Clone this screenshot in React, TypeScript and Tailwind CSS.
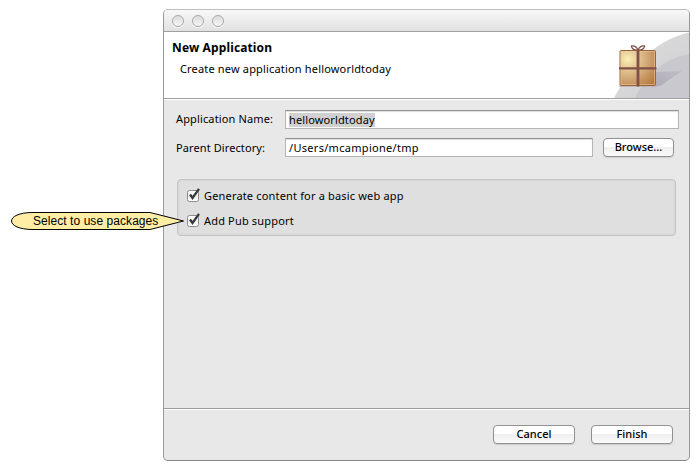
import type { ReactNode } from "react";

function PushButton({ children, className }: { children: ReactNode; className: string }) {
  return (
    <button
      type="button"
      className={`flex h-[19px] items-center justify-center whitespace-nowrap rounded-[4px] border border-[#929292] bg-linear-to-b from-white from-45% via-[#efefef] via-50% to-[#fafafa] pb-[2px] text-[11px] font-medium leading-none text-black shadow-[0_1px_1px_rgba(0,0,0,0.12)] ${className}`}
    >
      {children}
    </button>
  );
}

function CheckRow({ children }: { children: ReactNode }) {
  return (
    <label className="flex h-[25px] items-center">
      <svg className="mb-px h-[18px] w-[17px] shrink-0" viewBox="0 0 17 18" fill="none">
        <defs>
          <linearGradient id="box" x1="0" y1="0" x2="0" y2="1">
            <stop offset="0" stopColor="#fff" />
            <stop offset="0.5" stopColor="#eee" />
            <stop offset="1" stopColor="#fff" />
          </linearGradient>
        </defs>
        <rect x="0.5" y="4.5" width="11" height="11" rx="2" fill="url(#box)" stroke="#8b8b8b" />
        <path d="M3 8.500 L5.500 12 L12 2.800" stroke="#383838" strokeWidth="2.3" />
      </svg>
      <span className="whitespace-nowrap tracking-[0.17px]">{children}</span>
    </label>
  );
}

function TrafficLight() {
  return (
    <span className="size-3 rounded-full border border-[#a9a9a9] bg-linear-to-b from-[#dcdcdc] to-[#f6f6f6] shadow-[0_1px_0_rgba(255,255,255,0.8)]" />
  );
}

function GiftArt() {
  return (
    <svg className="h-[66px] w-[76px]" viewBox="0 0 76 66">
      <defs>
        <radialGradient id="paper" cx="0.22" cy="0.25" r="1">
          <stop offset="0" stopColor="#fbf0b4" />
          <stop offset="0.3" stopColor="#e3c594" />
          <stop offset="0.65" stopColor="#cb9c6a" />
          <stop offset="1" stopColor="#b47638" />
        </radialGradient>
        <linearGradient id="shade" x1="0" y1="1" x2="1" y2="0">
          <stop offset="0" stopColor="#a79fae" />
          <stop offset="1" stopColor="#b9b9c0" />
        </linearGradient>
        <linearGradient id="sweep" x1="0" y1="0" x2="1" y2="1">
          <stop offset="0" stopColor="#dedede" />
          <stop offset="1" stopColor="#cfcfd2" />
        </linearGradient>
      </defs>
      <path d="M1 66 C15 40 38 9 76 0.500 V66 Z" fill="url(#sweep)" />
      <path d="M22 66 C34 42 52 26 76 22 V66 Z" fill="#c8c8ce" />
      <path d="M42 54 L43 40 L69 39 L47 54 Z" fill="url(#shade)" opacity="0.7" />
      <path d="M6 53.500 H44 V55 H6 Z" fill="#b9a9b5" opacity="0.7" />
      <rect x="7" y="18.500" width="35.500" height="35" rx="1" fill="url(#paper)" stroke="#98643c" />
      <rect x="8" y="19.500" width="33.500" height="33" fill="none" stroke="#f1d2a3" strokeOpacity="0.5" />
      <path d="M25 17.500 V54.500" stroke="#815044" strokeWidth="2.800" />
      <path d="M6 36.300 H43.500" stroke="#815044" strokeWidth="2.200" />
      <path d="M25 18 C21 18.500 18.500 16.500 18.500 14 C21 13.500 23.500 15 25 18 C26.500 15 29 13.500 31.500 14 C31.500 16.500 29 18.500 25 18 Z" fill="#fff" fillOpacity="0.7" stroke="#815044" strokeWidth="1.300" />
    </svg>
  );
}

export default function App() {
  return (
    <div className="relative h-[470px] w-[699px] overflow-hidden bg-white pl-[163px] pt-[9px] font-['Noto_Sans','Open_Sans',sans-serif] text-[11px] leading-none text-black">
      <section className="flex h-[452px] w-[527px] flex-col overflow-hidden rounded-[5px] border border-[#999] border-t-[#bcbcbc] border-b-[#858585] bg-[#e8e8e8]">
        <div className="flex h-[22px] shrink-0 items-center gap-2 border-b border-[#a0a0a0] bg-linear-to-b from-[#f8f8f8] to-[#e1e1e1] pl-2 pt-px">
          <TrafficLight />
          <TrafficLight />
          <TrafficLight />
        </div>
        <header className="flex h-[67px] shrink-0 justify-between border-b border-[#a0a0a0] bg-white">
          <div className="flex flex-col pl-2 pt-[9px]">
            <h1 className="h-[21px] whitespace-nowrap text-[12px] font-bold leading-[14px] tracking-[0.13px]">New Application</h1>
            <p className="whitespace-nowrap pl-2 leading-[14px] tracking-[0.17px]">Create new application helloworldtoday</p>
          </div>
          <GiftArt />
        </header>
        <main className="flex h-[309px] shrink-0 flex-col border-t border-white pl-3 pt-[10px]">
          <div className="flex h-7 items-start">
            <label className="w-[109px] whitespace-nowrap pt-[2px] leading-[14px] tracking-[0.14px]">Application Name:</label>
            <div className="flex h-[19px] w-[394px] items-center border border-[#b5b5b5] border-t-[#929292] bg-white pl-[3px] shadow-[inset_0_1px_1px_#ddd]">
              <span className="h-[14px] whitespace-nowrap bg-[#d1d1d1] leading-[14px] tracking-[0.13px]">helloworldtoday</span>
            </div>
          </div>
          <div className="flex h-[41px] items-start">
            <label className="w-[109px] whitespace-nowrap pt-[3px] leading-[14px] tracking-[0.1px]">Parent Directory:</label>
            <div className="mr-[10px] flex h-[19px] w-[308px] items-center border border-[#b5b5b5] border-t-[#929292] bg-white pl-[3px] shadow-[inset_0_1px_1px_#ddd]">
              <span className="whitespace-nowrap leading-[14px] tracking-[0.3px]">/Users/mcampione/tmp</span>
            </div>
            <PushButton className="w-[71px]">Browse...</PushButton>
          </div>
          <div className="ml-px h-[57px] w-[499px] rounded-[4px] border border-[#c4c4c4] bg-[#dfdfdf] pl-[9px] pt-[3px] shadow-[inset_0_0_2px_#c9c9c9]">
            <CheckRow>Generate content for a basic web app</CheckRow>
            <CheckRow>Add Pub support</CheckRow>
          </div>
        </main>
        <footer className="flex flex-1 justify-end gap-4 border-t border-[#9c9c9c] pr-4 pt-4 shadow-[inset_0_1px_0_white]">
          <PushButton className="w-[82px]">Cancel</PushButton>
          <PushButton className="w-[82px]">Finish</PushButton>
        </footer>
      </section>
      <div className="absolute left-[10px] top-[211px] h-[20px] w-[175px]">
        <svg className="absolute inset-0 h-[20px] w-[175px]" viewBox="0 0 175 20">
          <path d="M23 1.500 H140 L173.500 10 L140 18.500 H23 C9 18.500 1.500 14.500 1.500 10 C1.500 5.500 9 1.500 23 1.500 Z" fill="#ffeda6" stroke="#000" />
        </svg>
        <span className="relative block whitespace-nowrap pl-[23px] pt-px font-['Liberation_Sans',sans-serif] text-[12px] leading-[19px] tracking-[0.06px]">Select to use packages</span>
      </div>
    </div>
  );
}
